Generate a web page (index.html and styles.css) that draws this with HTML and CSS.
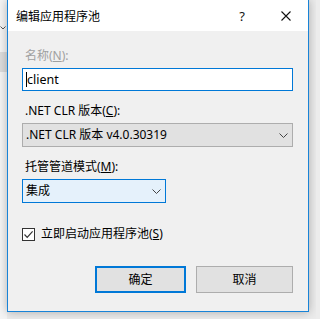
FILE: index.html
```html
<!DOCTYPE html>
<html lang="zh-CN">
<head>
<meta charset="utf-8">
<title>编辑应用程序池</title>
<link rel="stylesheet" href="styles.css">
</head>
<body>
<div class="screen">
  <div class="behind">
    <svg class="behind-chev" width="6" height="4" viewBox="0 0 6 4"><path d="M0.5 0.5 L3 3 L5.5 0.5" fill="none" stroke="#555" stroke-width="1"/></svg>
    <div class="behind-block"></div>
  </div>
  <div class="dialog">
    <div class="titlebar">
      <span class="title">编辑应用程序池</span>
      <span class="help">?</span>
      <svg class="close" width="10" height="10" viewBox="0 0 10 10"><path d="M0.5 0.5 L9.5 9.5 M9.5 0.5 L0.5 9.5" stroke="#111" stroke-width="1.1" fill="none"/></svg>
    </div>
    <div class="content">
      <div class="lbl disabled lbl-first">名称(<u>N</u>):</div>
      <div class="textbox"><span class="caret"></span>client</div>

      <div class="lbl">.NET CLR 版本(<u>C</u>):</div>
      <div class="combo combo-wide">
        <span class="combo-text">.NET CLR 版本 v4.0.30319</span>
        <svg class="chev" width="9" height="5" viewBox="0 0 9 5"><path d="M0.5 0.5 L4.5 4.5 L8.5 0.5" fill="none" stroke="#444" stroke-width="1"/></svg>
      </div>

      <div class="lbl">托管管道模式(<u>M</u>):</div>
      <div class="combo combo-focus">
        <span class="combo-text">集成</span>
        <svg class="chev" width="9" height="5" viewBox="0 0 9 5"><path d="M0.5 0.5 L4.5 4.5 L8.5 0.5" fill="none" stroke="#444" stroke-width="1"/></svg>
      </div>

      <div class="check-row">
        <span class="checkbox">
          <svg width="11" height="11" viewBox="0 0 11 11"><path d="M1.5 5.5 L4.2 8.3 L9.6 2.4" fill="none" stroke="#333" stroke-width="1.2"/></svg>
        </span>
        <span class="check-label">立即启动应用程序池(<u>S</u>)</span>
      </div>

      <div class="buttons">
        <div class="btn btn-default">确定</div>
        <div class="btn btn-cancel">取消</div>
      </div>
    </div>
  </div>
</div>
</body>
</html>
```

FILE: styles.css
```css
html, body {
  margin: 0;
  padding: 0;
}
body {
  background: #ececec;
  font-family: "Noto Sans", "Noto Sans CJK SC", sans-serif;
  font-size: 12px;
  color: #000;
}
.screen {
  width: 316px;
  height: 319px;
  overflow: hidden;
  display: flex;
  align-items: flex-start;
  background: #ebebeb;
}
.behind {
  width: 7px;
  height: 319px;
  flex: none;
  display: flex;
  flex-direction: column;
  background: #f4f4f4;
}
.behind-chev {
  margin: 26px 0 0 0;
}
.behind-block {
  margin-top: 22px;
  height: 20px;
  background: #dcdcdc;
}
.dialog {
  width: 302px;
  height: 312px;
  flex: none;
  box-sizing: border-box;
  border: 1px solid #1883d7;
  border-top: none;
  background: #f0f0f0;
  box-shadow: 0 0 9px rgba(0, 0, 0, 0.28);
  display: flex;
  flex-direction: column;
  position: relative;
}
.titlebar {
  height: 31px;
  background: #fff;
  display: flex;
  align-items: center;
  padding-left: 8px;
  flex: none;
}
.title {
  flex: 1;
  font-family: "Noto Sans CJK SC", sans-serif;
  font-size: 12px;
  line-height: 16px;
  padding-top: 0px;
}
.help {
  font-family: "Noto Sans", sans-serif;
  font-size: 13px;
  line-height: 16px;
  color: #111;
  margin-right: 36px;
}
.close {
  margin-right: 17px;
}
.content {
  padding: 0 0 0 14px;
  display: flex;
  flex-direction: column;
  align-items: flex-start;
}
.lbl {
  line-height: 16px;
  height: 16px;
  padding-left: 3px;
  margin-top: 12px;
  margin-bottom: 4px;
  white-space: nowrap;
}
.lbl-first {
  margin-top: 17px;
}
.disabled {
  color: #a0a0a0;
}
.textbox {
  box-sizing: border-box;
  width: 271px;
  height: 23px;
  border: 1px solid #0078d7;
  background: #fff;
  display: flex;
  align-items: center;
  padding-left: 3px;
  line-height: 16px;
  font-size: 12.5px;
}
.caret {
  width: 1px;
  height: 15px;
  background: #000;
  margin-right: 0px;
}
.combo {
  box-sizing: border-box;
  height: 24px;
  display: flex;
  align-items: center;
  padding: 0 4px 0 3px;
  border: 1px solid #adadad;
  background: #e1e1e1;
}
.combo-wide {
  width: 271px;
}
.combo-focus {
  width: 144px;
  border-color: #0078d7;
  background: #e5f1fb;
  margin-bottom: 0;
}
.combo-text {
  flex: 1;
  line-height: 16px;
  white-space: nowrap;
}
.chev {
  flex: none;
}
.check-row {
  display: flex;
  align-items: center;
  margin-top: 23px;
  height: 16px;
}
.checkbox {
  box-sizing: border-box;
  width: 13px;
  height: 13px;
  border: 1px solid #333;
  background: #fff;
  display: flex;
  align-items: center;
  justify-content: center;
}
.check-label {
  margin-left: 6px;
  line-height: 16px;
  white-space: nowrap;
}
.buttons {
  width: 271px;
  display: flex;
  justify-content: flex-end;
  gap: 10px;
  margin-top: 24px;
}
.btn {
  box-sizing: border-box;
  height: 27px;
  display: flex;
  align-items: center;
  justify-content: center;
  background: #e1e1e1;
  line-height: 16px;
}
.btn-default {
  width: 91px;
  border: 2px solid #0078d7;
}
.btn-cancel {
  width: 97px;
  border: 1px solid #adadad;
}
u {
  text-decoration: underline;
  text-underline-offset: 1px;
}
```
